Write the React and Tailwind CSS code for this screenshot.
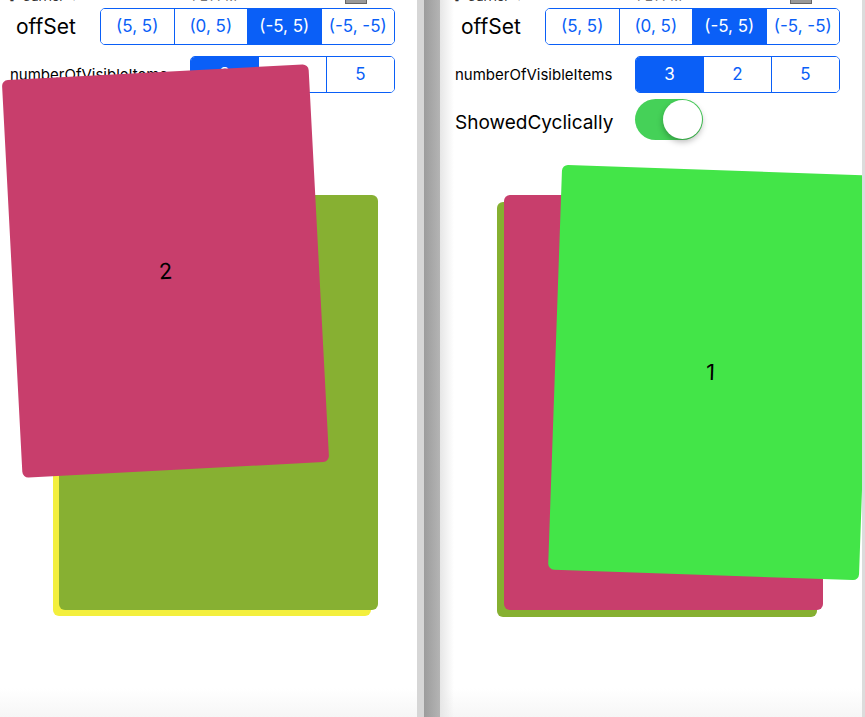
const Segmented = ({ items, selected, width }) => (
  <div
    className="flex h-[37px] rounded-[5px] border border-[#0a5ff7] overflow-hidden"
    style={{ width }}
  >
    {items.map((it, i) => (
      <div
        key={it}
        className={`flex-1 flex items-center justify-center text-[17px] ${
          i > 0 ? "border-l border-[#0a5ff7]" : ""
        } ${i === selected ? "bg-[#0a5ff7] text-white" : "bg-white text-[#0a5ff7]"}`}
      >
        {it}
      </div>
    ))}
  </div>
);

const Switch = () => (
  <div className="w-[68px] h-[41px] rounded-full bg-[#45d158] flex items-center justify-end pr-[1px]">
    <div className="w-[39px] h-[39px] rounded-full bg-white shadow-[0_3px_6px_rgba(0,0,0,0.28)]" />
  </div>
);

// status bar is mostly scrolled off; only the bottom of its glyphs shows
const StatusBar = () => (
  <div className="h-[4px] overflow-hidden">
    <div className="flex items-end justify-between -mt-[11px] px-[6px] text-[13px] text-[#333] leading-[15px]">
      <span>ᯤ Carrier ⌔</span>
      <span className="text-[#777]">4:21 PM</span>
      <span className="w-[22px] h-[12px] border border-[#666] bg-[#999] mr-[44px]" />
    </div>
  </div>
);

const Controls = () => (
  <div className="flex flex-col">
    <StatusBar />
    <div className="flex items-center mt-[4px] h-[37px]">
      <span className="w-[100px] pl-[16px] text-[21px] text-black">offSet</span>
      <Segmented items={["(5, 5)", "(0, 5)", "(-5, 5)", "(-5, -5)"]} selected={2} width={295} />
    </div>
    <div className="flex items-center mt-[11px] h-[37px]">
      <span className="w-[190px] pl-[10px] pt-[2px] text-[15px] text-black">numberOfVisibleItems</span>
      <Segmented items={["3", "2", "5"]} selected={0} width={205} />
    </div>
    <div className="flex items-center mt-[6px] h-[41px]">
      <span className="w-[190px] pl-[10px] pt-[7px] text-[19px] text-black">ShowedCyclically</span>
      <Switch />
    </div>
  </div>
);

const Card = ({ color, left, top, w, h, rotate = 0, label }) => (
  <div
    className="absolute rounded-[6px] flex items-center justify-center text-[22px] text-black"
    style={{
      left,
      top,
      width: w,
      height: h,
      background: color,
      transform: `rotate(${rotate}deg)`,
    }}
  >
    {label}
  </div>
);

export default function App() {
  return (
    <div
      className="flex w-[865px] h-[717px] bg-white overflow-hidden"
      style={{ fontFamily: "Inter, 'Noto Sans', sans-serif" }}
    >
      <div className="relative w-[417px] h-full shrink-0 overflow-hidden bg-gradient-to-b from-white from-[96%] to-[#f6f6f6]">
        <Controls />
        <Card color="#f3ef3d" left={53} top={201} w={318} h={415} />
        <Card color="#87b032" left={59} top={195} w={319} h={415} />
        <Card color="#c83e6c" left={12} top={72} w={307} h={398} rotate={-3} label="2" />
      </div>
      <div className="w-[7px] h-full shrink-0 bg-[#d6d6d6]" />
      <div className="w-[16px] h-full shrink-0 bg-gradient-to-r from-[#9c9c9c] to-[#b4b4b4]" />
      <div className="relative w-[422px] h-full shrink-0 overflow-hidden bg-gradient-to-b from-white from-[96%] to-[#f6f6f6]">
        <div className="absolute inset-y-0 left-0 w-[14px] bg-gradient-to-r from-[#e6e6e6] to-transparent" />
        <div className="relative ml-[5px] h-full">
          <Controls />
          <Card color="#86b031" left={52} top={202} w={320} h={415} />
          <Card color="#c83e6c" left={59} top={195} w={319} h={415} />
          <Card color="#43e548" left={110} top={170} w={311} h={405} rotate={2} label="1" />
        </div>
      </div>
      <div className="w-[3px] h-full shrink-0 bg-[#dcdcdc]" />
    </div>
  );
}
